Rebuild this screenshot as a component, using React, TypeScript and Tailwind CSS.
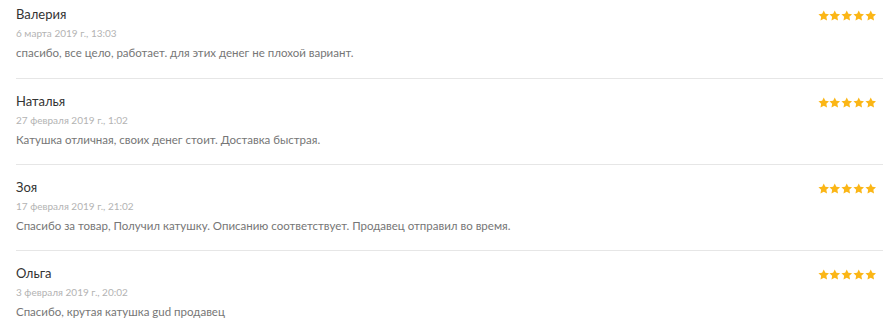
import React from "react";

const reviews = [
  {
    name: "Валерия",
    date: "6 марта 2019 г., 13:03",
    text: "спасибо, все цело, работает. для этих денег не плохой вариант.",
  },
  {
    name: "Наталья",
    date: "27 февраля 2019 г., 1:02",
    text: "Катушка отличная, своих денег стоит. Доставка быстрая.",
  },
  {
    name: "Зоя",
    date: "17 февраля 2019 г., 21:02",
    text: "Спасибо за товар, Получил катушку. Описанию соответствует. Продавец отправил во время.",
  },
  {
    name: "Ольга",
    date: "3 февраля 2019 г., 20:02",
    text: "Спасибо, крутая катушка gud продавец",
  },
];

function Star() {
  return (
    <svg width="11.5" height="11" viewBox="0 0 24 23" className="block">
      <path
        d="M12 0.8l3.35 7.1 7.75 1-5.7 5.35 1.45 7.7L12 18.2l-6.85 3.75 1.45-7.7L0.9 8.9l7.75-1z"
        fill="#fbb616"
      />
    </svg>
  );
}

function Stars() {
  return (
    <div className="flex gap-[0.2px] mr-[7px] mt-[5px]">
      <Star />
      <Star />
      <Star />
      <Star />
      <Star />
    </div>
  );
}

export default function App() {
  return (
    <div
      className="w-[895px] h-[323px] overflow-hidden bg-white pl-4 pr-3"
      style={{ fontFamily: "Lato, 'Noto Sans', sans-serif" }}
    >
      {reviews.map((r, i) => (
        <div
          key={i}
          className={`flex justify-between border-b border-[#e6e6e6] ${
            i === 0 ? "pt-[5px] pb-[16px]" : "pt-[13px] pb-[15px]"
          }`}
        >
          <div className="flex flex-col">
            <div className="text-[13px] leading-[18px] text-[#333333]">{r.name}</div>
            <div className="mt-[2px] text-[10px] leading-[16px] text-[#b3b3b3]">{r.date}</div>
            <div className="mt-[3px] text-[11.5px] leading-[18px] text-[#767676]">{r.text}</div>
          </div>
          <Stars />
        </div>
      ))}
    </div>
  );
}
